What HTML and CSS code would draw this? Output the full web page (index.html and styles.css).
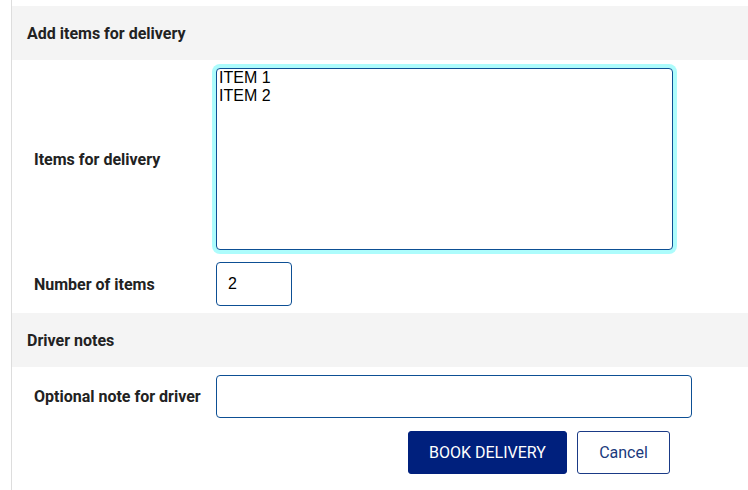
FILE: index.html
```html
<!DOCTYPE html>
<html lang="en">
<head>
<meta charset="utf-8">
<title>Add items for delivery</title>
<link rel="stylesheet" href="styles.css">
</head>
<body>
<div class="page">
  <div class="section-head">Add items for delivery</div>
  <div class="row row-items">
    <label class="label" for="items">Items for delivery</label>
    <textarea id="items" class="textarea">ITEM 1
ITEM 2</textarea>
  </div>
  <div class="row row-count">
    <label class="label" for="count">Number of items</label>
    <input id="count" class="input input-count" type="text" value="2">
  </div>
  <div class="section-head">Driver notes</div>
  <div class="row row-note">
    <label class="label" for="note">Optional note for driver</label>
    <input id="note" class="input input-note" type="text" value="">
  </div>
  <div class="actions">
    <button class="btn btn-primary" type="button">BOOK DELIVERY</button>
    <button class="btn btn-secondary" type="button">Cancel</button>
  </div>
</div>
</body>
</html>
```

FILE: styles.css
```css
html, body {
  margin: 0;
  padding: 0;
  background: #ffffff;
}
body {
  font-family: Roboto, "Liberation Sans", Arial, sans-serif;
  color: #222222;
}
.page {
  margin-left: 11px;
  border-left: 1px solid #dddddd;
  padding-top: 6px;
  min-height: 484px;
}
.section-head {
  height: 54px;
  display: flex;
  align-items: center;
  padding-left: 15px;
  background: #f4f4f4;
  font-weight: 700;
  font-size: 16px;
  color: #222222;
}
.row {
  display: flex;
  align-items: center;
}
.label {
  width: 182px;
  padding-left: 22px;
  font-weight: 700;
  font-size: 16px;
  color: #222222;
}
.row-items {
  padding-top: 8px;
}
.row-count {
  padding-top: 12px;
  padding-bottom: 7px;
}
.row-note {
  padding-top: 8px;
  padding-bottom: 13px;
}
.textarea {
  box-sizing: border-box;
  width: 457px;
  height: 182px;
  margin: 0;
  padding: 0 2px;
  border: 1px solid #0d4f94;
  border-radius: 4px;
  box-shadow: 0 0 0 4px #adfcfc;
  font-family: "Liberation Sans", Arial, sans-serif;
  font-size: 16px;
  line-height: 18px;
  color: #000000;
  resize: none;
  outline: none;
}
.input {
  box-sizing: border-box;
  margin: 0;
  border: 1px solid #0d4f94;
  border-radius: 4px;
  font-family: "Liberation Sans", Arial, sans-serif;
  font-size: 16px;
  color: #000000;
  outline: none;
  background: #ffffff;
}
.input-count {
  width: 76px;
  height: 44px;
  padding: 0 11px;
}
.input-note {
  width: 476px;
  height: 43px;
  padding: 0 11px;
}
.actions {
  display: flex;
  gap: 10px;
  padding-left: 396px;
}
.btn {
  box-sizing: border-box;
  height: 43px;
  margin: 0;
  border-radius: 3px;
  font-family: Roboto, "Liberation Sans", Arial, sans-serif;
  font-size: 16px;
  cursor: pointer;
}
.btn-primary {
  width: 159px;
  background: #00207d;
  border: 1px solid #00207d;
  color: #ffffff;
  font-weight: 400;
}
.btn-secondary {
  width: 93px;
  background: #ffffff;
  border: 1px solid #1a3a86;
  color: #1a3a7c;
  font-weight: 400;
}
```
